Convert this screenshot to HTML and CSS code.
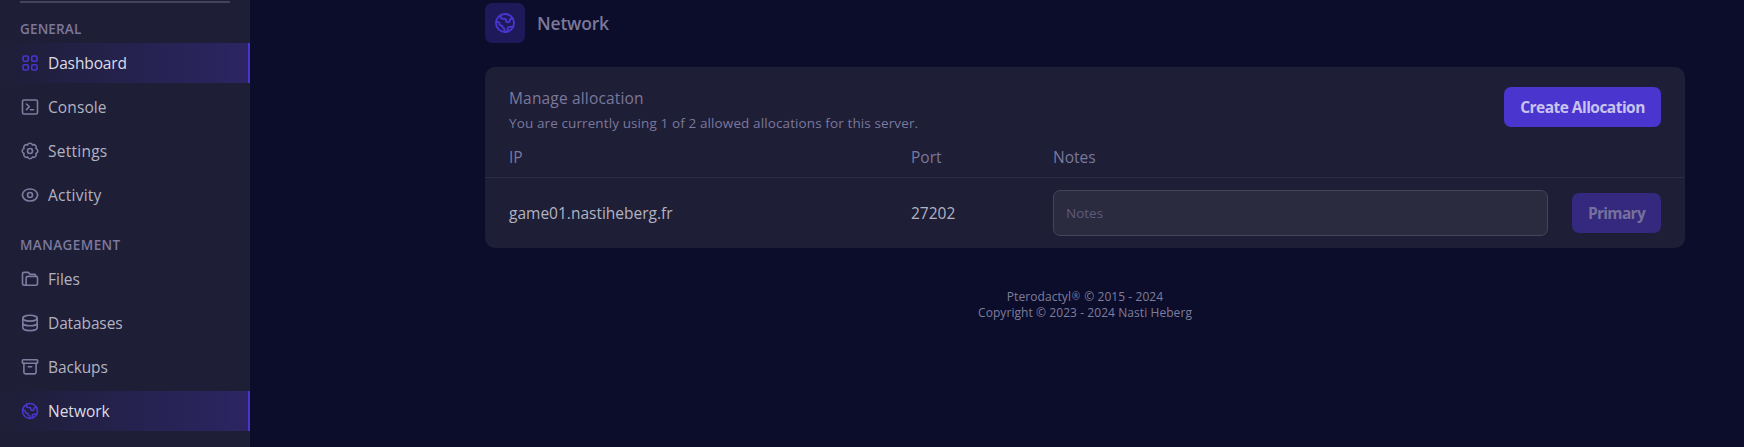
FILE: index.html
```html
<!DOCTYPE html>
<html lang="en">
<head>
<meta charset="utf-8">
<title>Network</title>
<link rel="stylesheet" href="styles.css">
</head>
<body>
<svg class="sprite" aria-hidden="true">
  <symbol id="globe" viewBox="0 0 20 20"><circle cx="10" cy="10" r="7.500"/><path d="M6.400 3.500v1.300c0 1 .7 1.700 1.700 1.700h1.300c1 0 1.500.6 1.500 1.400s.6 1.500 1.500 1.500 1.500-.7 1.500-1.500.6-1.400 1.400-1.400h1.500M2.600 9.200h1.200c1 0 1.600.6 1.600 1.500s.6 1.400 1.300 1.400 1.300.5 1.300 1.200.4 1 .9 1 .7.5.7 1v2.100M12.200 17.100v-2.200c0-1 .7-1.700 1.700-1.700h2.900"/></symbol>
</svg>
<div class="app">
  <aside class="sidebar">
    <hr class="rule">
    <h2 class="group general">GENERAL</h2>
    <nav class="menu">
      <a class="item active"><svg class="icon" viewBox="0 0 20 20"><rect x="3" y="3" width="5.300" height="5.300" rx="1.500"/><rect x="11.700" y="3" width="5.300" height="5.300" rx="1.500"/><rect x="3" y="11.700" width="5.300" height="5.300" rx="1.500"/><rect x="11.700" y="11.700" width="5.300" height="5.300" rx="1.500"/></svg><span class="tight">Dashboard</span></a>
      <a class="item"><svg class="icon" viewBox="0 0 20 20"><rect x="2.500" y="3" width="15" height="14" rx="1.500"/><path d="M6.500 7 9.300 9.800 6.500 12.600M10.500 12.800h3"/></svg><span class="loose">Console</span></a>
      <a class="item"><svg class="icon" viewBox="0 0 20 20"><path d="M7.550 4.090A2.530 2.530 0 0 1 12.450 4.090A2.530 2.530 0 0 1 15.910 7.550A2.530 2.530 0 0 1 15.910 12.450A2.530 2.530 0 0 1 12.450 15.910A2.530 2.530 0 0 1 7.550 15.910A2.530 2.530 0 0 1 4.090 12.450A2.530 2.530 0 0 1 4.090 7.550A2.530 2.530 0 0 1 7.550 4.090z"/><circle cx="10" cy="10" r="2.500"/></svg><span class="looser">Settings</span></a>
      <a class="item"><svg class="icon" viewBox="0 0 20 20"><path d="M2.300 10C3 6.300 6.200 4 10 4s7 2.300 7.700 6c-.7 3.700-3.900 6-7.700 6s-7-2.300-7.700-6z"/><circle cx="10" cy="10" r="2.500"/></svg><span class="looser">Activity</span></a>
    </nav>
    <h2 class="group management">MANAGEMENT</h2>
    <nav class="menu">
      <a class="item"><svg class="icon" viewBox="0 0 20 20"><path d="M15.700 7.300V6.600c0-.8-.6-1.300-1.400-1.300h-4L8.300 3.400H3.900c-.8 0-1.400.6-1.400 1.400v9.800c0 1 .7 1.700 1.600 1.700h11.800c.9 0 1.600-.7 1.600-1.600V9c0-.9-.7-1.600-1.600-1.600H7.800c-1 0-1.700.7-1.700 1.600v5.500c0 1-.7 1.800-1.700 1.800"/></svg><span>Files</span></a>
      <a class="item"><svg class="icon" viewBox="0 0 20 20"><ellipse cx="10" cy="5.200" rx="7.200" ry="2.900"/><path d="M2.800 5.200v9.500c0 1.600 3.200 2.900 7.200 2.900s7.200-1.300 7.200-2.900V5.200M2.800 9.900c0 1.600 3.200 2.900 7.200 2.900s7.200-1.300 7.200-2.900"/></svg><span class="tight">Databases</span></a>
      <a class="item"><svg class="icon" viewBox="0 0 20 20"><rect x="2.400" y="2.800" width="15.200" height="3.500" rx=".8"/><path d="M3.900 6.300v9c0 1 .7 1.600 1.600 1.600h9c1 0 1.600-.7 1.600-1.600v-9M8.300 9.800h3.400"/></svg><span class="tight">Backups</span></a>
      <a class="item active"><svg class="icon"><use href="#globe"/></svg><span>Network</span></a>
    </nav>
  </aside>
  <main class="main">
    <header class="heading">
      <span class="badge"><svg class="badge-icon"><use href="#globe"/></svg></span>
      <h1 class="title">Network</h1>
    </header>
    <section class="card">
      <div class="card-head">
        <div>
          <p class="card-title">Manage allocation</p>
          <p class="card-text">You are currently using 1 of 2 allowed allocations for this server.</p>
        </div>
        <button class="button create">Create Allocation</button>
      </div>
      <div class="row labels"><span>IP</span><span>Port</span><span>Notes</span></div>
      <div class="row values">
        <span>game01.nastiheberg.fr</span><span>27202</span>
        <input class="notes" type="text" placeholder="Notes">
        <button class="button primary" disabled>Primary</button>
      </div>
    </section>
    <footer class="footer"><p>Pterodactyl<span class="mark">®</span> © 2015 - 2024</p><p>Copyright © 2023 - 2024 Nasti Heberg</p></footer>
  </main>
</div>
</body>
</html>
```
FILE: styles.css
```css
* { box-sizing: border-box; margin: 0; }
body { background: #0b0d2a; color: #b3b3c0; font: 15.5px/24px "Open Sans", "Noto Sans", sans-serif; overflow: hidden; }
.sprite { display: none; }
.app { display: flex; height: 447px; }
.sidebar { width: 250px; padding-top: 1px; background: #1e1e37; flex: none; }
.rule { height: 2px; margin: 0 20px; border: 0; background: #45435c; }
.group { padding-left: 20px; font-size: 13.5px; line-height: 20px; font-weight: 600; color: #7b789b; }
.general { margin: 16px 0 4px; letter-spacing: .15px; }
.management { margin: 20px 0 4px; letter-spacing: .43px; }
.menu { display: grid; grid-auto-rows: 40px; row-gap: 4px; }
.item { display: flex; align-items: center; gap: 8px; padding-left: 20px; }
.tight { letter-spacing: -.12px; }
.loose { letter-spacing: .1px; }
.looser { letter-spacing: .25px; }
.icon { width: 20px; height: 20px; flex: none; }
.icon, .badge-icon { fill: none; stroke: #7f7ca0; stroke-width: 1.6; stroke-linecap: round; stroke-linejoin: round; }
.active { color: #dcdce4; background: linear-gradient(90deg, #1e1e37, #2c2563); border-right: 2px solid #4a35cf; }
.active .icon, .badge-icon { stroke: #4a35cf; }
.main { width: 1200px; margin-left: 235px; }
.heading { display: flex; align-items: center; gap: 12px; margin-top: 3px; height: 40px; }
.badge { display: grid; place-items: center; width: 40px; height: 40px; border-radius: 7px; background: #1e1959; }
.badge-icon { width: 24px; height: 24px; }
.title { font-size: 17.5px; font-weight: 600; letter-spacing: -.2px; color: #7b789b; }
.card { margin-top: 24px; height: 181px; border-radius: 10px; background: #1e1e37; overflow: hidden; }
.card-head { display: flex; justify-content: space-between; padding: 20px 24px 0; height: 77px; color: #7b789b; }
.card-title { line-height: 22px; letter-spacing: .17px; }
.card-text { font-size: 13.5px; line-height: 20px; margin-top: 4px; letter-spacing: .11px; }
.button { height: 40px; padding: 0; border: 0; border-radius: 7px; background: #4a35cf; color: #c9c3ef; font: bold 15.5px/24px "Open Sans", "Noto Sans", sans-serif; letter-spacing: -.53px; }
.create { width: 157px; }
.primary { width: 89px; margin-left: 24px; background: #34297f; color: #76719c; letter-spacing: -.7px; }
.row { display: grid; grid-template-columns: 402px 142px 495px 113px; padding: 0 24px; align-items: center; }
.labels { height: 34px; padding-bottom: 8px; color: #7b789b; border-bottom: 1px solid #2b2b42; }
.values { height: 70px; }
.notes { width: 495px; height: 46px; padding: 0 12px; border: 1px solid #45445b; border-radius: 7px; background: #2b2b40; font: 13.5px "Open Sans", "Noto Sans", sans-serif; }
.notes::placeholder { color: #5d5b7e; opacity: 1; }
.footer { margin-top: 41px; text-align: center; font-size: 12px; line-height: 16px; letter-spacing: .07px; color: #7f7d9d; }
.mark { display: inline-block; width: 10px; font-size: 10px; line-height: 12px; vertical-align: 1.5px; }
```
